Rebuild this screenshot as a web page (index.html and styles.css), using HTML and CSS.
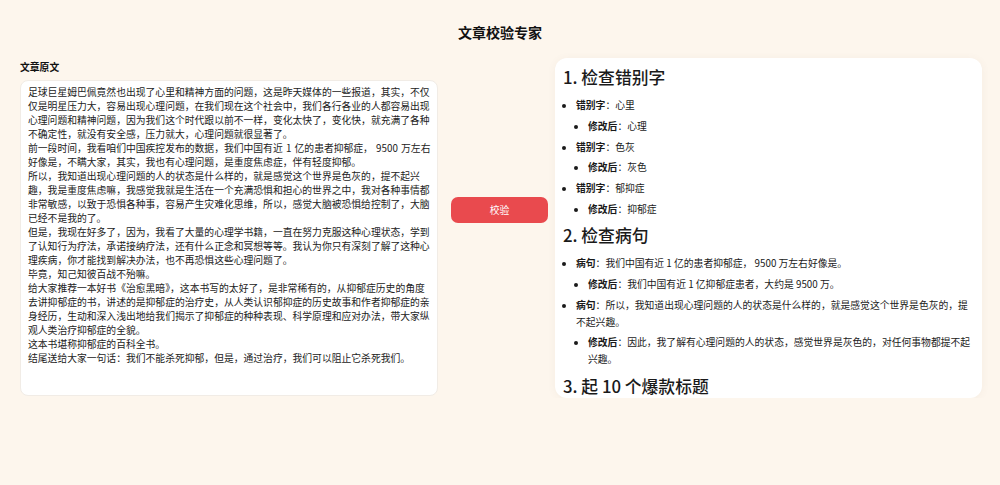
FILE: index.html
```
<!DOCTYPE html>
<html lang="zh-CN">
<head>
    <meta charset="UTF-8">
    <meta name="viewport" content="width=device-width, initial-scale=1.0">
    <title>文章校验专家</title>
    <link rel="stylesheet" href="styles.css">
</head>
<body>
    <div class="header">
        <h1>文章校验专家</h1>
    </div>

    <div class="main">
        <div class="input-col">
            <label for="article" class="field-label">文章原文</label>
            <textarea id="article" class="article">足球巨星姆巴佩竟然也出现了心里和精神方面的问题，这是昨天媒体的一些报道，其实，不仅仅是明星压力大，容易出现心理问题，在我们现在这个社会中，我们各行各业的人都容易出现心理问题和精神问题，因为我们这个时代跟以前不一样，变化太快了，变化快，就充满了各种不确定性，就没有安全感，压力就大，心理问题就很显著了。
前一段时间，我看咱们中国疾控发布的数据，我们中国有近 1 亿的患者抑郁症， 9500 万左右好像是，不瞒大家，其实，我也有心理问题，是重度焦虑症，伴有轻度抑郁。
所以，我知道出现心理问题的人的状态是什么样的，就是感觉这个世界是色灰的，提不起兴趣，我是重度焦虑嘛，我感觉我就是生活在一个充满恐惧和担心的世界之中，我对各种事情都非常敏感，以致于恐惧各种事，容易产生灾难化思维，所以，感觉大脑被恐惧给控制了，大脑已经不是我的了。
但是，我现在好多了，因为，我看了大量的心理学书籍，一直在努力克服这种心理状态，学到了认知行为疗法，承诺接纳疗法，还有什么正念和冥想等等。我认为你只有深刻了解了这种心理疾病，你才能找到解决办法，也不再恐惧这些心理问题了。
毕竟，知己知彼百战不殆嘛。
给大家推荐一本好书《治愈黑暗》，这本书写的太好了，是非常稀有的，从抑郁症历史的角度去讲抑郁症的书，讲述的是抑郁症的治疗史，从人类认识郁抑症的历史故事和作者抑郁症的亲身经历，生动和深入浅出地给我们揭示了抑郁症的种种表现、科学原理和应对办法，带大家纵观人类治疗抑郁症的全貌。
这本书堪称抑郁症的百科全书。
结尾送给大家一句话：我们不能杀死抑郁，但是，通过治疗，我们可以阻止它杀死我们。</textarea>
        </div>

        <div class="action-col">
            <button class="check-btn">校验</button>
        </div>

        <div class="result">
            <h2>1. 检查错别字</h2>
            <ul>
                <li><strong>错别字</strong>：心里
                    <ul>
                        <li><strong>修改后</strong>：心理</li>
                    </ul>
                </li>
                <li><strong>错别字</strong>：色灰
                    <ul>
                        <li><strong>修改后</strong>：灰色</li>
                    </ul>
                </li>
                <li><strong>错别字</strong>：郁抑症
                    <ul>
                        <li><strong>修改后</strong>：抑郁症</li>
                    </ul>
                </li>
            </ul>

            <h2>2. 检查病句</h2>
            <ul>
                <li><strong>病句</strong>：我们中国有近 1 亿的患者抑郁症， 9500 万左右好像是。
                    <ul>
                        <li><strong>修改后</strong>：我们中国有近 1 亿抑郁症患者，大约是 9500 万。</li>
                    </ul>
                </li>
                <li><strong>病句</strong>：所以，我知道出现心理问题的人的状态是什么样的，就是感觉这个世界是色灰的，提不起兴趣。
                    <ul>
                        <li><strong>修改后</strong>：因此，我了解有心理问题的人的状态，感觉世界是灰色的，对任何事物都提不起兴趣。</li>
                    </ul>
                </li>
            </ul>

            <h2>3. 起 10 个爆款标题</h2>
        </div>
    </div>
</body>
</html>
```

FILE: styles.css
```
body, html {
    margin: 0;
    padding: 0;
    font-family: "Noto Sans CJK SC", "Noto Sans", sans-serif;
    background-color: #FDF6ED;
    color: #222;
}

/* Header */
.header {
    padding-top: 22px;
    text-align: center;
}

.header h1 {
    margin: 0;
    font-size: 14px;
    line-height: 20px;
    font-weight: bold;
    color: #111;
}

/* Main layout */
.main {
    display: grid;
    grid-template-columns: 418px 1fr 427px;
    padding: 0 18px 0 20px;
    margin-top: 16px;
}

.field-label {
    display: block;
    margin: 2px 0 6px;
    font-size: 9.8px;
    line-height: 14px;
    font-weight: bold;
    color: #111;
}

.article {
    display: block;
    box-sizing: border-box;
    width: 100%;
    height: 316px;
    margin: 0;
    padding: 4px 4px 4px 7px;
    border: 1px solid #F1ECE6;
    border-radius: 8px;
    background-color: #fff;
    font-family: inherit;
    font-size: 9.8px;
    line-height: 14px;
    word-spacing: 1px;
    color: #222;
    resize: none;
    overflow: hidden;
    outline: none;
}

.action-col {
    display: flex;
    justify-content: center;
    align-items: flex-start;
    padding-left: 6px;
}

.check-btn {
    margin-top: 139px;
    width: 97px;
    height: 26px;
    border: none;
    border-radius: 7px;
    background-color: #E94A4E;
    color: #fff;
    font-family: inherit;
    font-size: 9.8px;
    cursor: pointer;
}

.check-btn:hover {
    background-color: #d93c40;
}

/* Result panel */
.result {
    box-sizing: border-box;
    height: 340px;
    padding: 8px 8px 0;
    background-color: #fff;
    border-radius: 12px;
    box-shadow: 0 1px 8px rgba(120, 90, 60, 0.06);
    overflow: hidden;
    color: #1a1a1a;
}

.result h2 {
    margin: 0;
    font-size: 16.8px;
    line-height: 22px;
    font-weight: 500;
}

.result ul {
    margin: 9px 0 6.5px;
    padding-left: 13px;
    list-style-type: disc;
}

.result ul ul {
    margin: 4px 0 0;
    padding-left: 12px;
}

.result li {
    font-size: 9.8px;
    line-height: 16.8px;
}

.result li + li {
    margin-top: 4px;
}

.result strong {
    font-weight: bold;
}
```
